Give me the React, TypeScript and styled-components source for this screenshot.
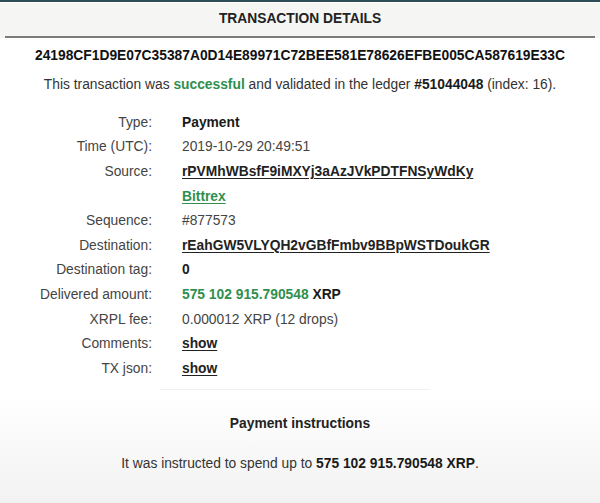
import React from "react";
import styled, { createGlobalStyle } from "styled-components";

const GlobalStyle = createGlobalStyle`
  html, body {
    margin: 0;
    padding: 0;
    background: #ffffff;
  }
  body {
    font-family: "Liberation Sans", Arial, sans-serif;
    font-size: 13.8px;
    color: #222;
  }
`;

type Row = {
  label: string;
  value: React.ReactNode;
};

const Page = styled.div`
  width: 600px;
  height: 503px;
  display: flex;
  flex-direction: column;
  overflow: hidden;
  background: #fff;
`;

const Header = styled.div`
  border-top: 2px solid #2c4c57;
  box-shadow: inset 0 1px 0 #ffffff;
  background: #f5f5f4;
  padding: 0 5px;
`;

const HeaderTitle = styled.h1`
  margin: 0;
  height: 34px;
  line-height: 34px;
  text-align: center;
  font-size: 13.8px;
  font-weight: bold;
  color: #222;
  border-bottom: 2px solid #7c7c7c;
`;

const Hash = styled.div`
  margin-top: 9px;
  line-height: 18px;
  text-align: center;
  font-weight: bold;
  color: #111;
`;

const Status = styled.div`
  margin-top: 11px;
  line-height: 18px;
  text-align: center;
  color: #333;
`;

const Green = styled.span`
  color: #2f8f4e;
  font-weight: bold;
`;

const Strong = styled.span`
  font-weight: bold;
  color: #1a1a1a;
`;

const Grid = styled.div`
  margin-top: 16px;
  display: grid;
  grid-template-columns: 152px 1fr;
  column-gap: 30px;
  grid-auto-rows: 24.6px;
  align-items: center;
`;

const Label = styled.div`
  text-align: right;
  color: #444;
  white-space: nowrap;
`;

const Value = styled.div`
  color: #444;
  white-space: nowrap;
`;

const Link = styled.a<{ $green?: boolean }>`
  color: ${(p) => (p.$green ? "#2f8f4e" : "#222")};
  font-weight: bold;
  text-decoration: underline;
  text-underline-offset: 2px;
`;

const Divider = styled.div`
  margin: 8px 0 0 160px;
  width: 270px;
  border-bottom: 1px solid #f0f0f0;
`;

const Footer = styled.div`
  flex: 1;
  margin-top: 5px;
  background: linear-gradient(#ffffff, #f2f2f2);
  text-align: center;
  padding-top: 20px;
`;

const FooterTitle = styled.h2`
  margin: 0;
  font-size: 13.8px;
  line-height: 18px;
  font-weight: bold;
  color: #222;
`;

const FooterText = styled.p`
  margin: 22px 0 0;
  line-height: 18px;
  color: #333;
`;

const rows: Row[] = [
  { label: "Type:", value: <Strong>Payment</Strong> },
  { label: "Time (UTC):", value: "2019-10-29 20:49:51" },
  { label: "Source:", value: <Link href="#">rPVMhWBsfF9iMXYj3aAzJVkPDTFNSyWdKy</Link> },
  { label: "", value: <Link href="#" $green>Bittrex</Link> },
  { label: "Sequence:", value: "#877573" },
  { label: "Destination:", value: <Link href="#">rEahGW5VLYQH2vGBfFmbv9BBpWSTDoukGR</Link> },
  { label: "Destination tag:", value: <Strong>0</Strong> },
  {
    label: "Delivered amount:",
    value: (
      <>
        <Green>575 102 915.790548</Green> <Strong>XRP</Strong>
      </>
    ),
  },
  { label: "XRPL fee:", value: "0.000012 XRP (12 drops)" },
  { label: "Comments:", value: <Link href="#">show</Link> },
  { label: "TX json:", value: <Link href="#">show</Link> },
];

const App = () => {
  return (
    <Page>
      <GlobalStyle />
      <Header>
        <HeaderTitle>TRANSACTION DETAILS</HeaderTitle>
      </Header>
      <Hash>24198CF1D9E07C35387A0D14E89971C72BEE581E78626EFBE005CA587619E33C</Hash>
      <Status>
        This transaction was <Green>successful</Green> and validated in the ledger{" "}
        <Strong>#51044048</Strong> (index: 16).
      </Status>
      <Grid>
        {rows.map((row, i) => (
          <React.Fragment key={i}>
            <Label>{row.label}</Label>
            <Value>{row.value}</Value>
          </React.Fragment>
        ))}
      </Grid>
      <Divider />
      <Footer>
        <FooterTitle>Payment instructions</FooterTitle>
        <FooterText>
          It was instructed to spend up to <Strong>575 102 915.790548 XRP</Strong>.
        </FooterText>
      </Footer>
    </Page>
  );
};

export default App;
